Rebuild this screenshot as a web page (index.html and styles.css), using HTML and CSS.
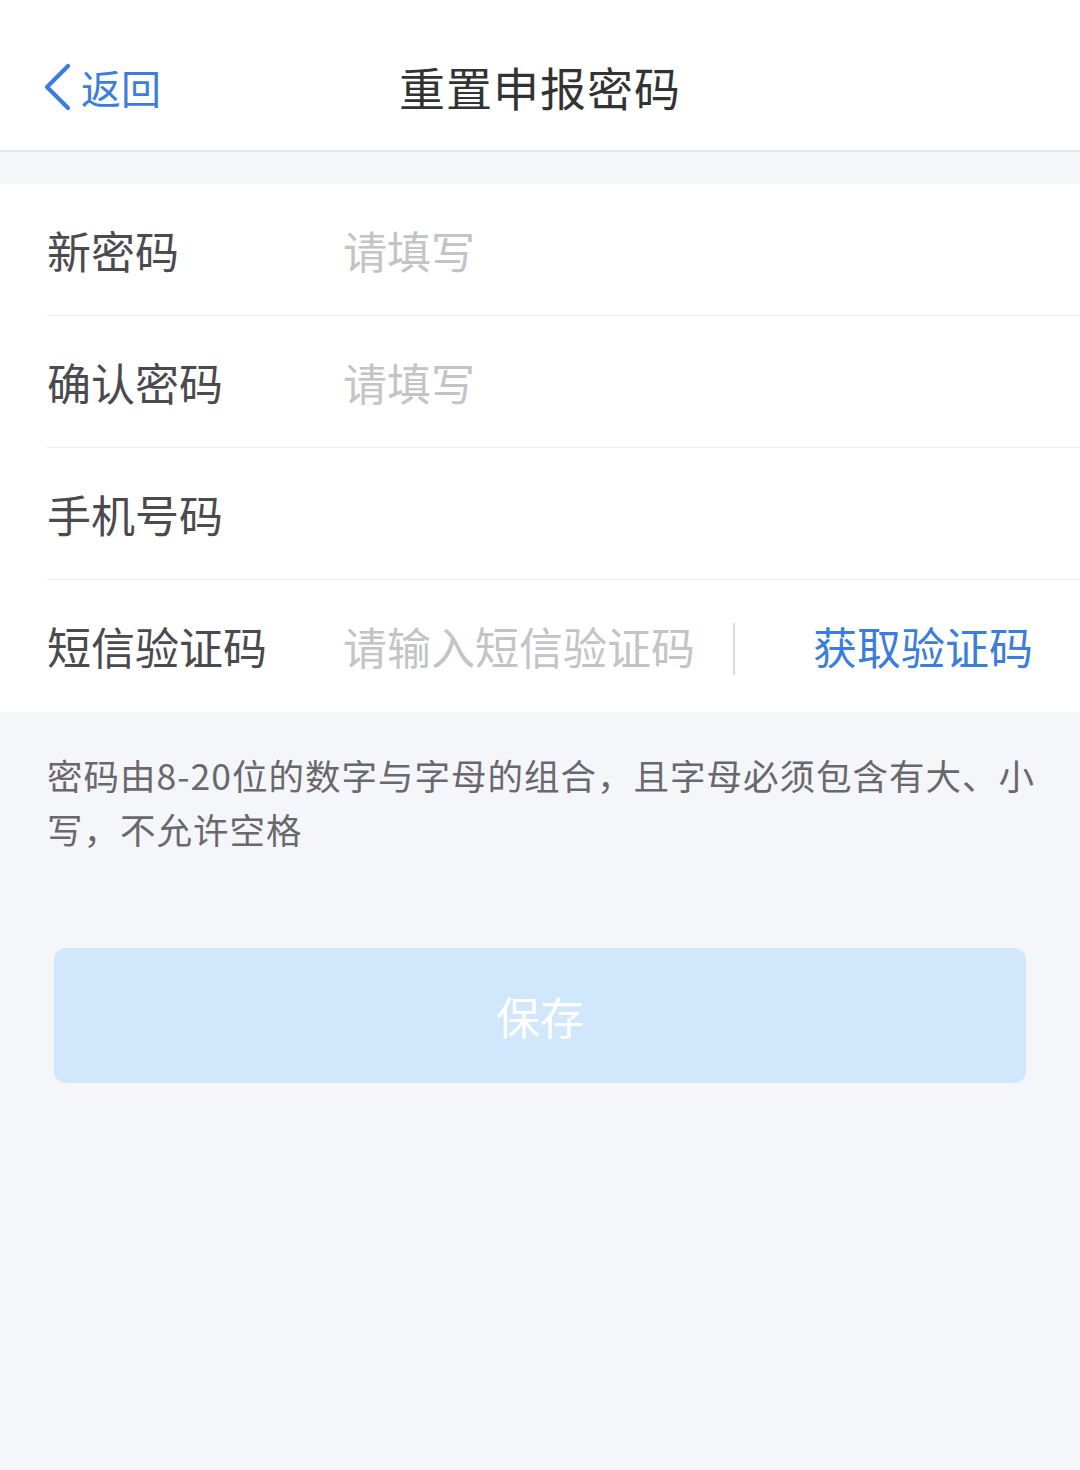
FILE: index.html
```html
<!DOCTYPE html>
<html lang="zh-CN">
<head>
<meta charset="utf-8">
<title>重置申报密码</title>
<link rel="stylesheet" href="styles.css">
</head>
<body>
<header class="navbar">
  <a class="back">
    <svg class="back-icon" width="30" height="48" viewBox="0 0 30 48"><polyline points="25,3 4,24 25,45" fill="none" stroke="#3b7ddd" stroke-width="4.2" stroke-linecap="round" stroke-linejoin="round"/></svg>
    <span>返回</span>
  </a>
  <h1 class="title">重置申报密码</h1>
</header>
<section class="form">
  <div class="row">
    <label class="label">新密码</label>
    <input class="field" type="password" placeholder="请填写">
  </div>
  <div class="row">
    <label class="label">确认密码</label>
    <input class="field" type="password" placeholder="请填写">
  </div>
  <div class="row">
    <label class="label">手机号码</label>
    <input class="field" type="text">
  </div>
  <div class="row">
    <label class="label">短信验证码</label>
    <input class="field code" type="text" placeholder="请输入短信验证码">
    <span class="vline"></span>
    <a class="get-code">获取验证码</a>
  </div>
</section>
<p class="hint">密码由8-20位的数字与字母的组合，且字母必须包含有大、小写，不允许空格</p>
<div class="actions">
  <button class="save" type="button">保存</button>
</div>
</body>
</html>
```
FILE: styles.css
```css
* { box-sizing: border-box; }
html, body {
  margin: 0;
  padding: 0;
  background: #f5f6fa;
  font-family: "Noto Sans CJK SC", "Noto Sans", sans-serif;
}
.navbar {
  position: relative;
  height: 152px;
  background: #fff;
  border-bottom: 2px solid #e6e6e8;
  display: flex;
  align-items: center;
  justify-content: center;
  margin-bottom: 32px;
}
.back {
  position: absolute;
  left: 43px;
  top: 63px;
  display: flex;
  align-items: center;
  color: #3b7ddd;
  font-size: 40px;
  line-height: 48px;
}
.back-icon { margin-right: 8px; display: block; }
.title {
  margin: 0;
  padding-top: 22px;
  font-size: 46px;
  font-weight: 400;
  color: #333;
  letter-spacing: 1px;
}
.form {
  background: #fff;
  padding-left: 47px;
}
.row {
  height: 132px;
  display: flex;
  align-items: center;
  border-bottom: 1px solid #ececee;
}
.row:last-child { border-bottom: none; }
.label {
  width: 296px;
  flex: none;
  font-size: 44px;
  color: #4a4a4f;
}
.field {
  flex: 1;
  min-width: 0;
  border: none;
  outline: none;
  background: transparent;
  font-family: inherit;
  font-size: 44px;
  color: #333;
  padding: 0;
  height: 60px;
}
.field::placeholder { color: #c4c4c7; }
.field.code { flex: none; width: 358px; }
.vline {
  width: 2px;
  height: 52px;
  background: #dcdcde;
  margin-top: 6px;
  margin-left: 32px;
  margin-right: 78px;
}
.get-code {
  font-size: 44px;
  color: #3b7ddd;
}
.hint {
  margin: 0;
  padding: 36px 40px 0 47px;
  font-size: 35.5px;
  line-height: 54px;
  letter-spacing: 1px;
  color: #68686d;
}
.actions {
  padding: 92px 54px 0;
}
.save {
  display: block;
  width: 100%;
  height: 135px;
  border: none;
  border-radius: 12px;
  background: #d1e7fb;
  color: #fff;
  font-family: inherit;
  font-size: 44px;
}
```
